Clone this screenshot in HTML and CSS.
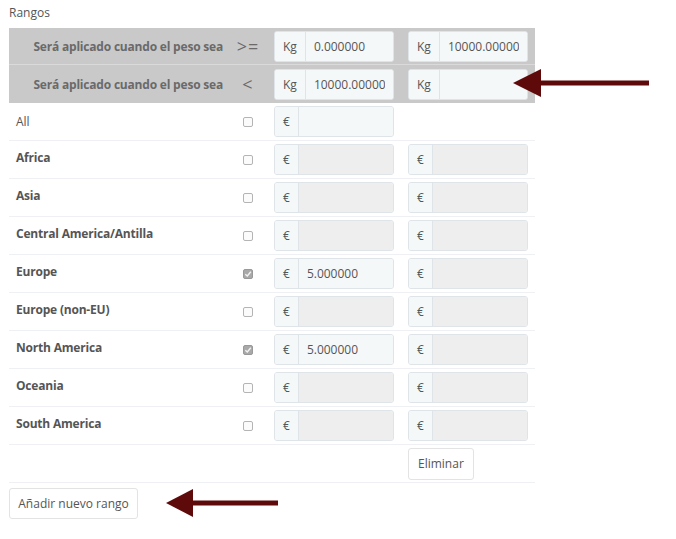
FILE: index.html
```html
<!DOCTYPE html>
<html>
  <head>
    <title>Rangos</title>
    <link rel="stylesheet" href="styles.css">
  </head>

  <body>
    <div class="page">
      <p class="section-title">Rangos</p>

      <div class="ranges">
        <div class="range-row range-head">
          <div class="head-label">Será aplicado cuando el peso sea</div>
          <div class="operator">&gt;=</div>
          <div class="cell">
            <div class="input-group"><span class="addon">Kg</span><input type="text" value="0.000000"></div>
          </div>
          <div class="cell">
            <div class="input-group"><span class="addon">Kg</span><input type="text" value="10000.000000"></div>
          </div>
        </div>

        <div class="range-row range-head range-head-last">
          <div class="head-label">Será aplicado cuando el peso sea</div>
          <div class="operator">&lt;</div>
          <div class="cell">
            <div class="input-group"><span class="addon">Kg</span><input type="text" value="10000.000000"></div>
          </div>
          <div class="cell">
            <div class="input-group"><span class="addon">Kg</span><input type="text" value=""></div>
          </div>
        </div>

        <div class="range-row">
          <div class="zone-label zone-all">All</div>
          <div class="check-cell"><span class="check"></span></div>
          <div class="cell">
            <div class="input-group"><span class="addon">€</span><input type="text" value=""></div>
          </div>
          <div class="cell"></div>
        </div>

        <div class="range-row">
          <div class="zone-label">Africa</div>
          <div class="check-cell"><span class="check"></span></div>
          <div class="cell"><div class="input-group"><span class="addon">€</span><input type="text" disabled></div></div>
          <div class="cell"><div class="input-group"><span class="addon">€</span><input type="text" disabled></div></div>
        </div>

        <div class="range-row">
          <div class="zone-label">Asia</div>
          <div class="check-cell"><span class="check"></span></div>
          <div class="cell"><div class="input-group"><span class="addon">€</span><input type="text" disabled></div></div>
          <div class="cell"><div class="input-group"><span class="addon">€</span><input type="text" disabled></div></div>
        </div>

        <div class="range-row">
          <div class="zone-label">Central America/Antilla</div>
          <div class="check-cell"><span class="check"></span></div>
          <div class="cell"><div class="input-group"><span class="addon">€</span><input type="text" disabled></div></div>
          <div class="cell"><div class="input-group"><span class="addon">€</span><input type="text" disabled></div></div>
        </div>

        <div class="range-row">
          <div class="zone-label">Europe</div>
          <div class="check-cell">
            <span class="check checked"><svg width="8" height="8" viewBox="0 0 8 8"><path d="M1.3 4.2 L3.3 6 L6.8 1.8" fill="none" stroke="#f2f2f2" stroke-width="1.4"/></svg></span>
          </div>
          <div class="cell"><div class="input-group"><span class="addon">€</span><input type="text" value="5.000000"></div></div>
          <div class="cell"><div class="input-group"><span class="addon">€</span><input type="text" disabled></div></div>
        </div>

        <div class="range-row">
          <div class="zone-label">Europe (non-EU)</div>
          <div class="check-cell"><span class="check"></span></div>
          <div class="cell"><div class="input-group"><span class="addon">€</span><input type="text" disabled></div></div>
          <div class="cell"><div class="input-group"><span class="addon">€</span><input type="text" disabled></div></div>
        </div>

        <div class="range-row">
          <div class="zone-label">North America</div>
          <div class="check-cell">
            <span class="check checked"><svg width="8" height="8" viewBox="0 0 8 8"><path d="M1.3 4.2 L3.3 6 L6.8 1.8" fill="none" stroke="#f2f2f2" stroke-width="1.4"/></svg></span>
          </div>
          <div class="cell"><div class="input-group"><span class="addon">€</span><input type="text" value="5.000000"></div></div>
          <div class="cell"><div class="input-group"><span class="addon">€</span><input type="text" disabled></div></div>
        </div>

        <div class="range-row">
          <div class="zone-label">Oceania</div>
          <div class="check-cell"><span class="check"></span></div>
          <div class="cell"><div class="input-group"><span class="addon">€</span><input type="text" disabled></div></div>
          <div class="cell"><div class="input-group"><span class="addon">€</span><input type="text" disabled></div></div>
        </div>

        <div class="range-row">
          <div class="zone-label">South America</div>
          <div class="check-cell"><span class="check"></span></div>
          <div class="cell"><div class="input-group"><span class="addon">€</span><input type="text" disabled></div></div>
          <div class="cell"><div class="input-group"><span class="addon">€</span><input type="text" disabled></div></div>
        </div>

        <div class="range-row">
          <div></div>
          <div></div>
          <div class="cell"></div>
          <div class="cell"><button class="btn">Eliminar</button></div>
        </div>
      </div>

      <button class="btn btn-add">Añadir nuevo rango</button>
    </div>

    <!-- annotation arrows drawn over the screenshot -->
    <svg class="arrows" width="676" height="539" viewBox="0 0 676 539">
      <polygon points="513,83 541,69 541,97" fill="#5e0a0a"/>
      <rect x="539" y="80.5" width="110" height="5" fill="#5e0a0a"/>
      <polygon points="166,503 193,489 193,517" fill="#5e0a0a"/>
      <rect x="191" y="500.5" width="87" height="5" fill="#5e0a0a"/>
    </svg>
  </body>
</html>
```

FILE: styles.css
```css
body{
  margin: 0;
  font-family: "Open Sans", "Liberation Sans", sans-serif;
  font-size: 12px;
  color: #555;
}
p{
  margin: 0;
}
.page{
  padding: 4px 9px 0 9px;
}
.section-title{
  line-height: 18px;
  height: 24px;
  color: #555;
}
.ranges{
  width: 526px;
}
.range-row{
  display: grid;
  grid-template-columns: 221px 36px 134px 135px;
  align-items: center;
  height: 38px;
  box-sizing: border-box;
  border-bottom: 1px solid #eef0f3;
}
.range-head{
  background-color: #c9c9c9;
  height: 37px;
  border-bottom: 1px solid #dadada;
}
.range-head-last{
  height: 38px;
  border-bottom: none;
}
.head-label{
  text-align: right;
  padding-right: 7px;
  font-weight: bold;
  letter-spacing: -0.2px;
  color: #6a6a6a;
}
.operator{
  text-align: center;
  font-size: 18px;
  letter-spacing: 1px;
  color: #6a6a6a;
  line-height: 20px;
}
.zone-label{
  padding-left: 7px;
  font-weight: bold;
  letter-spacing: -0.2px;
  line-height: 18px;
  padding-bottom: 4px;
}
.zone-all{
  font-weight: normal;
  letter-spacing: 0;
  padding-bottom: 0;
}
.check-cell{
  display: flex;
  justify-content: center;
}
.check{
  display: flex;
  align-items: center;
  justify-content: center;
  width: 10px;
  height: 10px;
  box-sizing: border-box;
  border: 1px solid #b4b4b4;
  border-radius: 2px;
  background-color: #fbfbfb;
  margin-right: 1px;
}
.check.checked{
  background-color: #a9a9a9;
  border-color: #999;
}
.cell{
  padding-left: 8px;
}
.input-group{
  display: flex;
  width: 120px;
  height: 31px;
  box-sizing: border-box;
  border: 1px solid #dfe4e8;
  border-radius: 3px;
  overflow: hidden;
  background-color: #f5f8f9;
}
.addon{
  padding: 0 8px;
  line-height: 29px;
  border-right: 1px solid #dfe4e8;
  background-color: #f5f8f9;
  color: #555;
}
.input-group input{
  flex: 1;
  min-width: 0;
  border: none;
  margin: 0;
  padding: 0 8px;
  background-color: #f5f8f9;
  font-family: "Open Sans", "Liberation Sans", sans-serif;
  font-size: 12px;
  color: #555;
  outline: none;
}
.input-group input:disabled{
  background-color: #eeeeee;
}
.btn{
  height: 32px;
  padding: 0 9px;
  border: 1px solid #e3e3e3;
  border-radius: 3px;
  background-color: #fff;
  font-family: "Open Sans", "Liberation Sans", sans-serif;
  font-size: 12px;
  color: #555;
}
.btn-add{
  margin-top: 5px;
  height: 31px;
  width: 129px;
  padding: 0;
}
.arrows{
  position: absolute;
  left: 0;
  top: 0;
  pointer-events: none;
}
```
